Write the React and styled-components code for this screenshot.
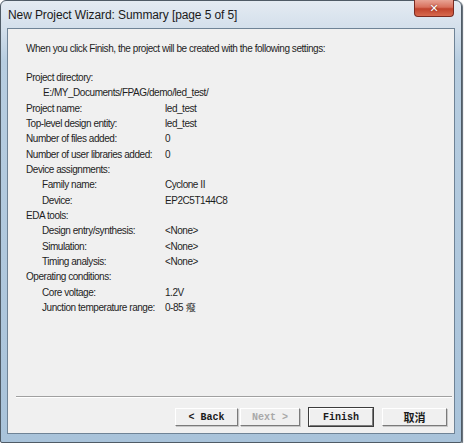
import React from "react";
import styled, { createGlobalStyle } from "styled-components";

const GlobalStyle = createGlobalStyle`
  html, body {
    margin: 0;
    padding: 0;
    background: #ffffff;
  }
`;

const Window = styled.div`
  width: 462px;
  height: 443px;
  box-sizing: border-box;
  display: flex;
  flex-direction: column;
  border: 1px solid #4f5b66;
  border-radius: 6px 6px 2px 2px;
  background: linear-gradient(180deg, #e4ebf2 0px, #d3dfeb 28px, #b7cde0 60px, #a9c3da 100%);
  box-shadow: 1px 1px 1px #5a6570;
  padding: 0 6px 8px 6px;
`;

const TitleBar = styled.div`
  height: 27px;
  display: flex;
  align-items: flex-start;
  justify-content: space-between;
`;

const Title = styled.div`
  font-family: "Liberation Sans", Arial, sans-serif;
  font-size: 12px;
  color: #1a1a1a;
  padding: 7px 0 0 1px;
  letter-spacing: -0.1px;
`;

const CloseButton = styled.div`
  width: 38px;
  height: 16px;
  margin-top: -1px;
  margin-right: 1px;
  border: 1px solid #7a2a20;
  border-top: none;
  border-radius: 0 0 4px 4px;
  background: linear-gradient(180deg, #e8a394 0%, #d8705c 45%, #c0432d 55%, #d76a4e 100%);
  display: flex;
  align-items: center;
  justify-content: center;
  color: #ffffff;
  font-family: "DejaVu Sans", sans-serif;
  font-weight: bold;
  font-size: 11px;
  text-shadow: 0 0 2px #6b1a10;
`;

const Client = styled.div`
  flex: 1;
  display: flex;
  flex-direction: column;
  background: #f0f0f0;
  border: 1px solid #6f8396;
  font-family: "Liberation Sans", Arial, sans-serif;
  font-size: 10px;
  color: #1e1e1e;
  letter-spacing: -0.45px;
`;

const Content = styled.div`
  flex: 1;
  padding: 12px 0 0 18px;
`;

const Intro = styled.div`
  line-height: 15px;
  margin-bottom: 14px;
`;

const Row = styled.div`
  display: flex;
  height: 15.33px;
  line-height: 15.33px;
  padding-left: ${(p) => p.$indent}px;
  white-space: nowrap;
`;

const Label = styled.span`
  width: ${(p) => 139 - p.$indent}px;
  flex-shrink: 0;
`;

const Value = styled.span``;

const Separator = styled.div`
  margin: 0 2px 0 8px;
  height: 0;
  border-top: 1px solid #a0a0a0;
  border-bottom: 1px solid #ffffff;
`;

const ButtonRow = styled.div`
  display: flex;
  justify-content: flex-end;
  padding: 10px 7px 7px 0;
`;

const ButtonGroup = styled.div`
  display: flex;
  gap: 2px;
  margin-right: ${(p) => p.$gap || 0}px;
`;

const Button = styled.div`
  width: ${(p) => p.$w || 63}px;
  height: 18px;
  box-sizing: border-box;
  display: flex;
  align-items: center;
  justify-content: center;
  background: #f0f0f0;
  border-top: 1px solid #ffffff;
  border-left: 1px solid #ffffff;
  border-right: 1px solid #7a7a7a;
  border-bottom: 1px solid #7a7a7a;
  box-shadow: ${(p) =>
    p.$default ? "0 0 0 1px #3c3c3c" : "1px 1px 0 #c8c8c8"};
  font-family: ${(p) =>
    p.$cjk
      ? '"Noto Sans CJK SC", sans-serif'
      : '"Liberation Mono", "Courier New", monospace'};
  font-size: ${(p) => (p.$cjk ? 11 : 10)}px;
  font-weight: bold;
  letter-spacing: 0;
  color: ${(p) => (p.$disabled ? "#a8a8a8" : "#1a1a1a")};
`;

const rows = [
  { label: "Project directory:", indent: 0 },
  { label: "E:/MY_Documents/FPAG/demo/led_test/", indent: 17, full: true },
  { label: "Project name:", value: "led_test", indent: 0 },
  { label: "Top-level design entity:", value: "led_test", indent: 0 },
  { label: "Number of files added:", value: "0", indent: 0 },
  { label: "Number of user libraries added:", value: "0", indent: 0 },
  { label: "Device assignments:", indent: 0 },
  { label: "Family name:", value: "Cyclone II", indent: 16 },
  { label: "Device:", value: "EP2C5T144C8", indent: 16 },
  { label: "EDA tools:", indent: 0 },
  { label: "Design entry/synthesis:", value: "<None>", indent: 16 },
  { label: "Simulation:", value: "<None>", indent: 16 },
  { label: "Timing analysis:", value: "<None>", indent: 16 },
  { label: "Operating conditions:", indent: 0 },
  { label: "Core voltage:", value: "1.2V", indent: 16 },
  { label: "Junction temperature range:", value: "0-85 癈", indent: 16 },
];

function App() {
  return (
    <>
      <GlobalStyle />
      <Window>
        <TitleBar>
          <Title>New Project Wizard: Summary [page 5 of 5]</Title>
          <CloseButton>✕</CloseButton>
        </TitleBar>
        <Client>
          <Content>
            <Intro>
              When you click Finish, the project will be created with the
              following settings:
            </Intro>
            {rows.map((row, index) => (
              <Row key={index} $indent={row.indent}>
                {row.full ? (
                  row.label
                ) : (
                  <>
                    <Label $indent={row.indent}>{row.label}</Label>
                    {row.value && <Value>{row.value}</Value>}
                  </>
                )}
              </Row>
            ))}
          </Content>
          <Separator />
          <ButtonRow>
            <ButtonGroup $gap={9}>
              <Button>&lt; Back</Button>
              <Button $w={60} $disabled>
                Next &gt;
              </Button>
            </ButtonGroup>
            <ButtonGroup $gap={9}>
              <Button $w={64} $default>
                Finish
              </Button>
            </ButtonGroup>
            <Button $w={65} $cjk>
              取消
            </Button>
          </ButtonRow>
        </Client>
      </Window>
    </>
  );
}

export default App;
